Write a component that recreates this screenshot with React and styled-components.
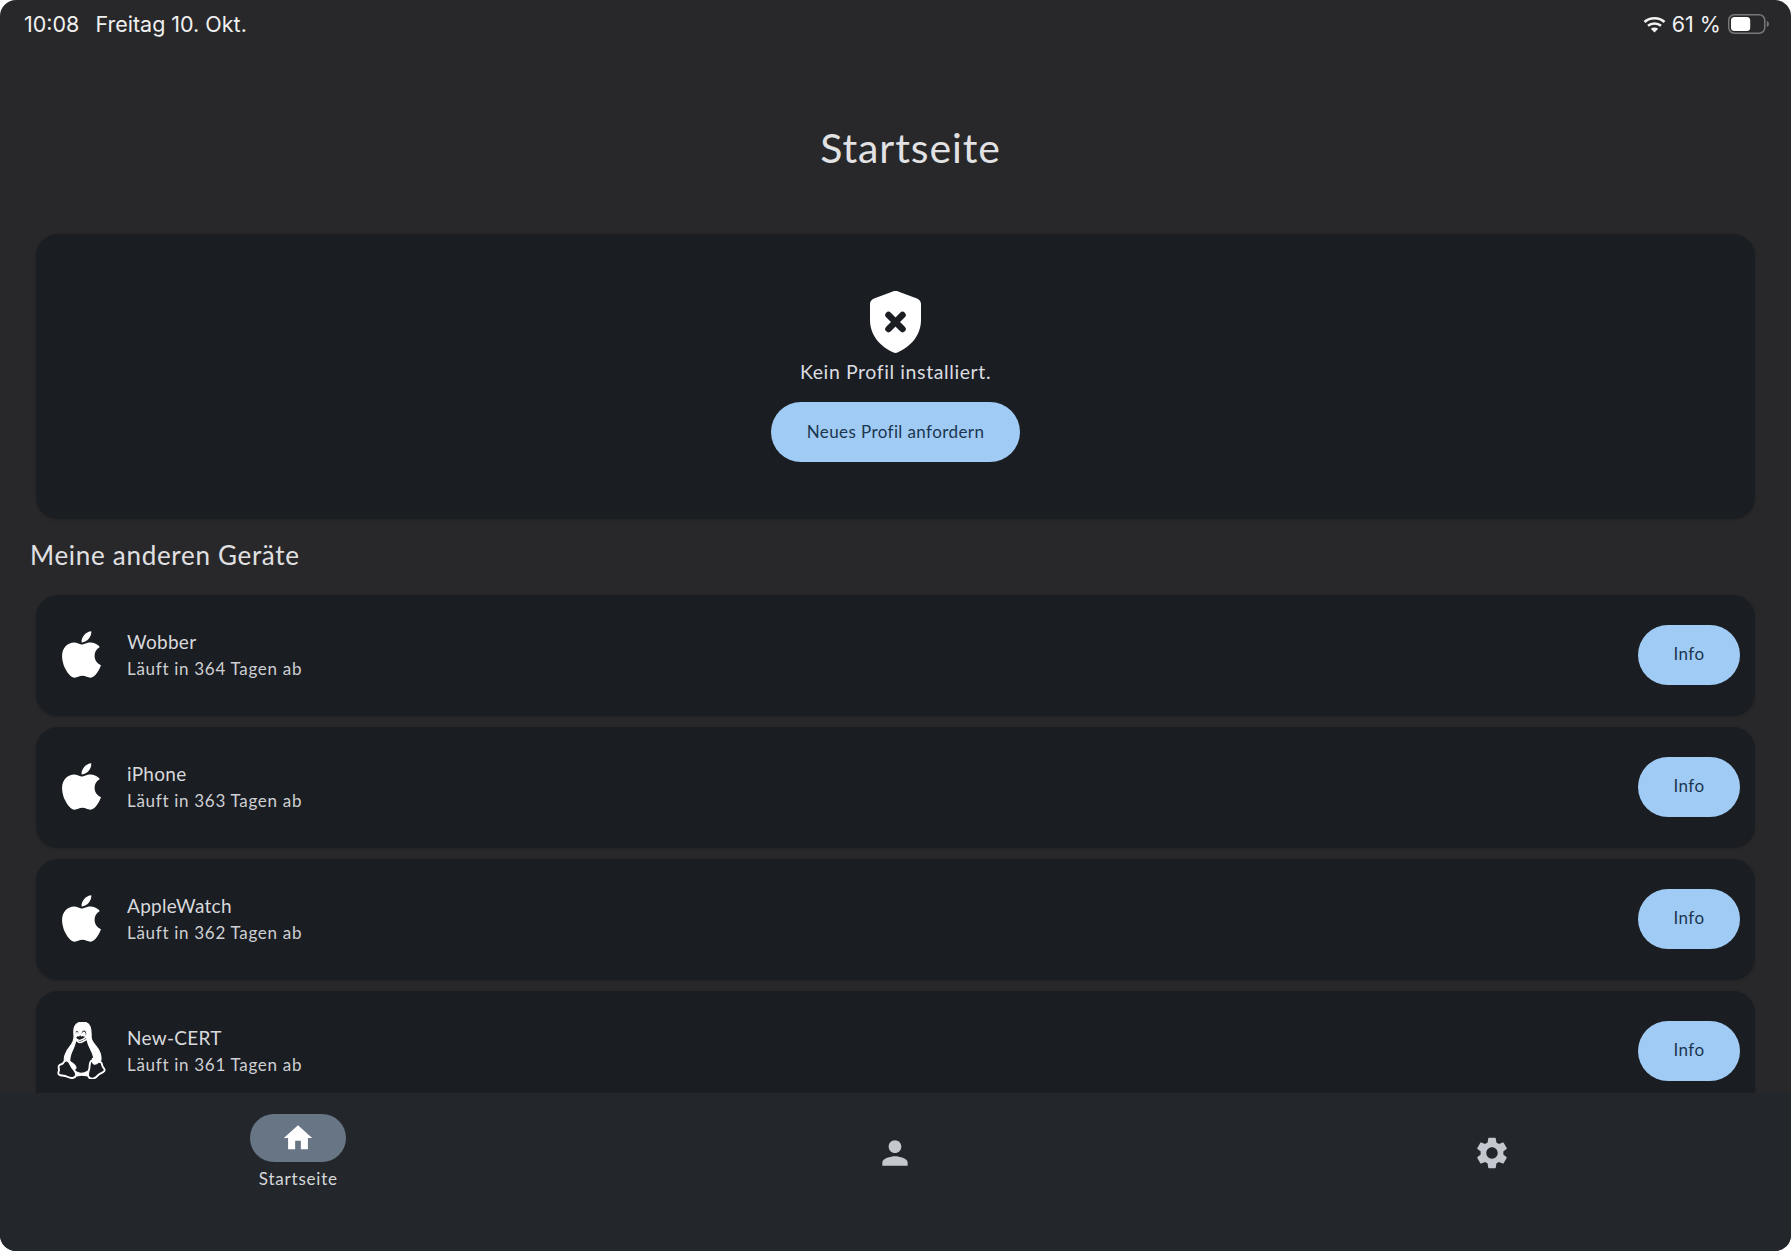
import React from "react";
import styled, { createGlobalStyle } from "styled-components";
import { FaApple, FaLinux } from "react-icons/fa";
import { MdHome, MdPerson, MdSettings } from "react-icons/md";

const GlobalStyle = createGlobalStyle`
  html, body {
    margin: 0;
    padding: 0;
    height: 100%;
    background: #ffffff;
  }
  #root {
    height: 100%;
  }
`;

const devices = [
  { name: "Wobber", days: 364, os: "apple" },
  { name: "iPhone", days: 363, os: "apple" },
  { name: "AppleWatch", days: 362, os: "apple" },
  { name: "New-CERT", days: 361, os: "linux" },
];

function ShieldIcon() {
  return (
    <svg width="51" height="62" viewBox="0 0 51 62">
      <path
        d="M25.5 0 C27 0 28 .4 29.500 1 L47 7.500 C49.500 8.500 51 10.500 51 13 L51 29 C51 44 41 55.500 27.500 61.500 C26.200 62.100 24.800 62.100 23.500 61.500 C10 55.500 0 44 0 29 L0 13 C0 10.500 1.500 8.500 4 7.500 L21.500 1 C23 .4 24 0 25.500 0 Z"
        fill="#ffffff"
      />
      <path
        d="M18.500 24 L32.500 38 M32.500 24 L18.500 38"
        stroke="#1a1d22"
        strokeWidth="6.500"
        strokeLinecap="round"
      />
    </svg>
  );
}

function WifiIcon() {
  return (
    <svg width="23" height="17" viewBox="0 0 23 17">
      <path d="M1.500 6 C7 1 16 1 21.500 6" fill="none" stroke="#f2f2f2" strokeWidth="2.600" />
      <path d="M5 9.800 C8.500 6.800 14.500 6.800 18 9.800" fill="none" stroke="#f2f2f2" strokeWidth="2.600" />
      <path d="M11.500 16.500 L7.800 12.800 C10 11.200 13 11.200 15.200 12.800 Z" fill="#f2f2f2" />
    </svg>
  );
}

function BatteryIcon({ level }) {
  return (
    <svg width="41" height="20" viewBox="0 0 41 20">
      <rect x=".75" y=".75" width="36" height="18.500" rx="5.500" fill="none" stroke="#77777a" strokeWidth="1.500" />
      <rect x="3" y="3" width={31.5 * level} height="14" rx="3.500" fill="#ffffff" />
      <path d="M38.800 7 C40.200 7.600 41 8.700 41 10 C41 11.300 40.200 12.400 38.800 13 Z" fill="#77777a" />
    </svg>
  );
}

export default function App() {
  return (
    <>
      <GlobalStyle />
      <Screen>
        <StatusBar>
          <StatusLeft>
            <span>10:08</span>
            <span>Freitag 10. Okt.</span>
          </StatusLeft>
          <StatusRight>
            <WifiIcon />
            <Percent>61 %</Percent>
            <BatteryIcon level={0.61} />
          </StatusRight>
        </StatusBar>

        <Content>
          <PageTitle>Startseite</PageTitle>

          <ProfileCard>
            <ShieldIcon />
            <ProfileText>Kein Profil installiert.</ProfileText>
            <PillButton $wide>Neues Profil anfordern</PillButton>
          </ProfileCard>

          <SectionTitle>Meine anderen Geräte</SectionTitle>

          <DeviceList>
            {devices.map((d) => (
              <DeviceRow key={d.name}>
                <DeviceIcon>
                  {d.os === "apple" ? (
                    <FaApple size={53} />
                  ) : (
                    <FaLinux size={57} stroke="currentColor" strokeWidth={10} />
                  )}
                </DeviceIcon>
                <DeviceInfo>
                  <DeviceName>{d.name}</DeviceName>
                  <DeviceExpiry>Läuft in {d.days} Tagen ab</DeviceExpiry>
                </DeviceInfo>
                <PillButton>Info</PillButton>
              </DeviceRow>
            ))}
          </DeviceList>
        </Content>

        <BottomNav>
          <NavItem>
            <NavPill>
              <MdHome size={34} />
            </NavPill>
            <NavLabel>Startseite</NavLabel>
          </NavItem>
          <NavItem $plain>
            <MdPerson size={38} />
          </NavItem>
          <NavItem $plain>
            <MdSettings size={38} />
          </NavItem>
        </BottomNav>
      </Screen>
    </>
  );
}

const Screen = styled.div`
  height: 1251px;
  display: flex;
  flex-direction: column;
  overflow: hidden;
  border-radius: 16px;
  background: #28282a;
  font-family: "Lato", "Liberation Sans", sans-serif;
`;

const StatusBar = styled.div`
  flex: none;
  height: 48px;
  display: flex;
  align-items: center;
  justify-content: space-between;
  padding: 0 22px 0 24px;
  font-family: "Inter", "Liberation Sans", sans-serif;
  font-size: 21.500px;
  color: #f0f0f0;
`;

const StatusLeft = styled.div`
  display: flex;
  gap: 16px;
`;

const StatusRight = styled.div`
  display: flex;
  align-items: center;
  gap: 7px;
`;

const Percent = styled.span`
  margin-left: -1px;
`;

const Content = styled.div`
  flex: 1;
  min-height: 0;
  overflow: hidden;
  display: flex;
  flex-direction: column;
`;

const PageTitle = styled.h1`
  flex: none;
  box-sizing: border-box;
  margin: 0;
  height: 186px;
  padding: 12px 0 0 30px;
  display: flex;
  align-items: center;
  justify-content: center;
  font-size: 41px;
  font-weight: 400;
  letter-spacing: 0.9px;
  color: #e2e2e4;
`;

const ProfileCard = styled.div`
  flex: none;
  height: 285px;
  box-sizing: border-box;
  margin: 0 36px 1px;
  padding-top: 57px;
  display: flex;
  flex-direction: column;
  align-items: center;
  background: #1a1d22;
  border-radius: 22px;
  box-shadow: 0 1px 3px rgba(0, 0, 0, 0.18);
`;

const ProfileText = styled.div`
  margin: 8px 0 19px;
  height: 22px;
  line-height: 22px;
  font-size: 19.500px;
  letter-spacing: 0.6px;
  color: #dcdde0;
`;

const PillButton = styled.button`
  flex: none;
  width: ${(p) => (p.$wide ? "249px" : "102px")};
  height: 60px;
  padding: 0 0 2px;
  border: none;
  border-radius: 30px;
  background: #a0cbf4;
  color: #1c3650;
  font-family: inherit;
  font-size: 17px;
  letter-spacing: 0.4px;
`;

const SectionTitle = styled.h2`
  flex: none;
  box-sizing: border-box;
  margin: 0;
  height: 75px;
  padding: 0 0 5px 30px;
  display: flex;
  align-items: center;
  font-size: 26px;
  font-weight: 400;
  letter-spacing: 0.7px;
  color: #e0e0e3;
`;

const DeviceList = styled.div`
  flex: none;
  display: flex;
  flex-direction: column;
  gap: 11px;
  margin: 0 36px;
`;

const DeviceRow = styled.div`
  flex: none;
  box-sizing: border-box;
  height: 121px;
  display: flex;
  align-items: center;
  padding: 0 15px 2px 0;
  background: #1a1d22;
  border-radius: 22px;
  box-shadow: 0 1px 3px rgba(0, 0, 0, 0.18);
`;

const DeviceIcon = styled.div`
  flex: none;
  width: 91px;
  padding-right: 1px;
  box-sizing: border-box;
  display: flex;
  justify-content: center;
  color: #ffffff;
`;

const DeviceInfo = styled.div`
  flex: 1;
  display: flex;
  flex-direction: column;
  gap: 5px;
`;

const DeviceName = styled.div`
  height: 23px;
  line-height: 23px;
  font-size: 19px;
  letter-spacing: 0.3px;
  color: #d8d9dc;
`;

const DeviceExpiry = styled.div`
  height: 22px;
  line-height: 22px;
  font-size: 17px;
  letter-spacing: 0.7px;
  color: #cfd0d3;
`;

const BottomNav = styled.nav`
  flex: none;
  height: 158px;
  padding-right: 1px;
  display: grid;
  grid-template-columns: repeat(3, 1fr);
  background: #23272b;
`;

const NavItem = styled.div`
  display: flex;
  flex-direction: column;
  align-items: center;
  padding-top: ${(p) => (p.$plain ? "41px" : "21px")};
  color: #c4c8ce;
`;

const NavPill = styled.div`
  width: 96px;
  height: 48px;
  display: flex;
  align-items: center;
  justify-content: center;
  border-radius: 24px;
  background: #677585;
  color: #ffffff;
`;

const NavLabel = styled.div`
  margin-top: 6px;
  height: 22px;
  line-height: 22px;
  font-size: 17px;
  letter-spacing: 0.8px;
  color: #d6d8da;
`;
